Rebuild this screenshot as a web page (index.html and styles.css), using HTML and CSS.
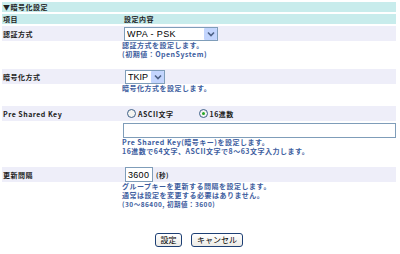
FILE: index.html
```html
<!DOCTYPE html>
<html lang="ja">
<head>
    <meta charset="UTF-8">
    <title>暗号化設定</title>
    <link rel="stylesheet" href="styles.css">
</head>
<body>
    <div class="container">
        <div class="title">▼暗号化設定</div>
        <div class="row head">
            <div class="label">項目</div>
            <div class="value">設定内容</div>
        </div>

        <!-- 認証方式 -->
        <div class="item item-auth">
            <div class="row">
                <div class="label">認証方式</div>
                <div class="value">
                    <span class="select select-auth">
                        <select><option>WPA - PSK</option></select>
                        <span class="arrow"><svg width="8" height="6" viewBox="0 0 8 6"><path d="M1 1.5 L4 4.5 L7 1.5" fill="none" stroke="#4d6185" stroke-width="1.6"/></svg></span>
                    </span>
                </div>
            </div>
            <div class="desc">認証方式を設定します。<br>(初期値：OpenSystem)</div>
        </div>

        <!-- 暗号化方式 -->
        <div class="item item-enc">
            <div class="row">
                <div class="label">暗号化方式</div>
                <div class="value">
                    <span class="select select-enc">
                        <select><option>TKIP</option></select>
                        <span class="arrow"><svg width="8" height="6" viewBox="0 0 8 6"><path d="M1 1.5 L4 4.5 L7 1.5" fill="none" stroke="#4d6185" stroke-width="1.6"/></svg></span>
                    </span>
                </div>
            </div>
            <div class="desc">暗号化方式を設定します。</div>
        </div>

        <!-- Pre Shared Key -->
        <div class="item item-psk">
            <div class="row">
                <div class="label">Pre Shared Key</div>
                <div class="value">
                    <label class="radio"><input type="radio" name="keytype">ASCII文字</label>
                    <label class="radio"><input type="radio" name="keytype" checked>16進数</label>
                </div>
            </div>
            <div class="field-row"><input type="text" class="text-key"></div>
            <div class="desc">Pre Shared Key(暗号キー)を設定します。<br>16進数で64文字、ASCII文字で8～63文字入力します。</div>
        </div>

        <!-- 更新間隔 -->
        <div class="item item-interval">
            <div class="row">
                <div class="label">更新間隔</div>
                <div class="value">
                    <input type="text" class="text-interval" value="3600">
                    <span class="unit">(秒)</span>
                </div>
            </div>
            <div class="desc">グループキーを更新する間隔を設定します。<br>通常は設定を変更する必要はありません。<br><span class="small">(30～86400, 初期値：3600)</span></div>
        </div>

        <div class="buttons">
            <button class="button button-ok">設定</button>
            <button class="button button-cancel">キャンセル</button>
        </div>
    </div>
</body>
</html>
```

FILE: styles.css
```css
body {
    margin: 0;
    font-family: "Noto Sans CJK JP", sans-serif;
    font-size: 7px;
    letter-spacing: 0.5px;
    color: #222;
    background-color: #fff;
}
.container {
    width: 394px;
    margin-left: 2px;
    padding-top: 2px;
}
.title {
    height: 10px;
    line-height: 10px;
    background-color: #c8ecec;
    font-weight: bold;
    padding-left: 1px;
    margin-bottom: 2px;
}
.row {
    display: flex;
    align-items: center;
    height: 15px;
    background-color: #eeeef9;
}
.row.head {
    height: 10px;
    background-color: #c8ecec;
    font-weight: bold;
    margin-bottom: 2px;
}
.label {
    width: 119px;
    padding-left: 1px;
    font-weight: bold;
}
.value {
    flex: 1;
    display: flex;
    align-items: center;
    margin-left: 2px;
}
.desc {
    margin-left: 120px;
    line-height: 9px;
    color: #3d5d9e;
    font-weight: bold;
}
.small {
    font-size: 6.5px;
}

/* 項目ごとの間隔 */
.item-auth {
    margin-bottom: 10px;
}
.item-enc {
    margin-bottom: 13px;
}
.item-psk {
    margin-bottom: 11px;
}

/* セレクトボックス */
.select {
    position: relative;
    display: inline-block;
    height: 14px;
}
.select select {
    appearance: none;
    -webkit-appearance: none;
    height: 14px;
    border: 1px solid #7f9db9;
    border-radius: 0;
    background-color: #fff;
    font-family: "Liberation Sans", sans-serif;
    font-size: 9px;
    letter-spacing: 0.4px;
    color: #000;
    padding: 0 2px;
    margin: 0;
}
.select-auth select {
    width: 94px;
}
.select-enc {
    margin-left: 1px;
}
.select-enc select {
    width: 40px;
    padding: 0 14px 0 2px;
    letter-spacing: 0;
}
.arrow {
    position: absolute;
    top: 1px;
    right: 1px;
    width: 13px;
    height: 12px;
    background-color: #c3d5fd;
    border-radius: 1px;
    display: flex;
    align-items: center;
    justify-content: center;
}

/* ラジオボタン */
.radio {
    display: flex;
    align-items: center;
    margin-left: 3px;
    margin-right: 22px;
    font-weight: bold;
}
.radio input {
    appearance: none;
    -webkit-appearance: none;
    width: 9px;
    height: 9px;
    margin: 0 2px 0 0;
    border: 1px solid #3d5f88;
    border-radius: 50%;
    background-color: #f4f4f0;
    display: flex;
    align-items: center;
    justify-content: center;
}
.radio input:checked::after {
    content: "";
    width: 3px;
    height: 3px;
    border-radius: 50%;
    background-color: #24a724;
}

/* テキスト入力 */
.field-row {
    margin: 2px 0 0 121px;
}
.text-key, .text-interval {
    box-sizing: border-box;
    height: 15px;
    border: 1px solid #7f9db9;
    padding: 0 2px;
    font-family: "Liberation Sans", sans-serif;
    font-size: 9px;
    margin: 0;
}
.text-key {
    display: block;
    width: 273px;
}
.text-interval {
    width: 28px;
    margin-left: 1px;
    letter-spacing: 0.3px;
}
.unit {
    margin-left: 3px;
    font-size: 6.5px;
    font-weight: bold;
}

/* ボタン */
.buttons {
    display: flex;
    justify-content: center;
    gap: 9px;
    margin-top: 24px;
}
.button {
    height: 14px;
    padding: 0;
    border: 1px solid #1d3f74;
    border-radius: 3px;
    background: linear-gradient(#ffffff, #ecebe6);
    font-family: "Noto Sans CJK JP", sans-serif;
    font-size: 8px;
    line-height: 12px;
    color: #000;
}
.button-ok {
    width: 27px;
}
.button-cancel {
    width: 52px;
}
```
